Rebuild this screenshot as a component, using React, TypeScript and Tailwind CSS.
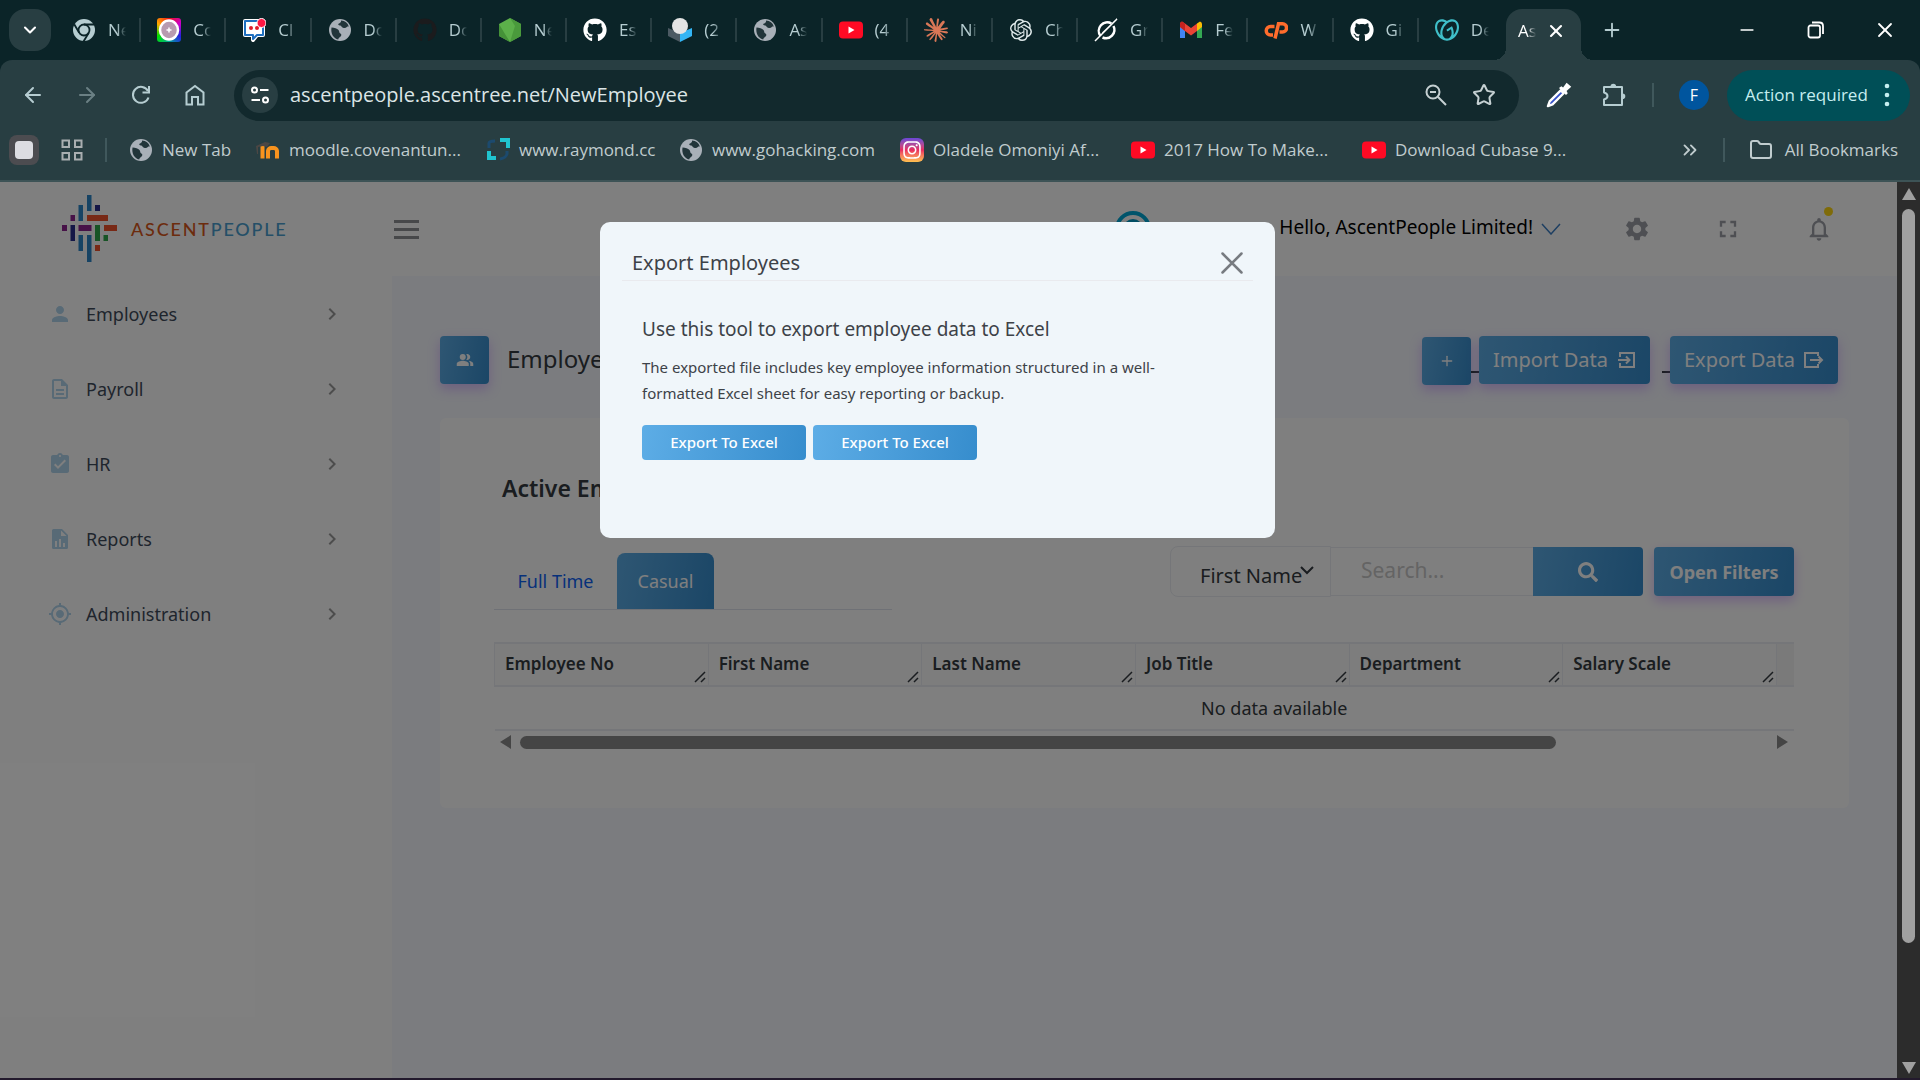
import type { ReactNode } from "react";
import { FaGithub, FaInstagram, FaSearch } from "react-icons/fa";
import {
  MdAssignmentTurnedIn,
  MdChevronRight,
  MdFullscreen,
  MdGpsFixed,
  MdNotificationsNone,
  MdOutlineDescription,
  MdPeopleAlt,
  MdPerson,
  MdSettings,
} from "react-icons/md";
import { SiClaude, SiGodaddy, SiOpenai } from "react-icons/si";
import { ArrowLeft, ArrowRight, ChevronDown, ChevronsRight, Folder, Minus, Plus, Star, X } from "lucide-react";

const BLUE = "bg-linear-100 from-[#5dade6] to-[#368dcd] text-white";
const GLOW = "shadow-[0_5px_12px_rgba(176,106,252,0.4)]";

/* ---------- favicons ---------- */

function Globe() {
  return (
    <svg viewBox="0 0 24 24" className="size-6">
      <circle cx="12" cy="12" r="11" fill="#a9b0b8" />
      <path
        d="M3.500 9.500c3 .2 5.500 1 7 2.500 1.200 1.200.2 2.500 1.500 3.300 1 .6 1.800 1.200 1 2.700-.8 1.400-2.500 1.600-2.800 3.500C5.500 20.500 2.500 15.500 3.500 9.500zM13 2.600c.5 1.900-1.200 2.600-2.500 3.200-.9.500.2 1.800 1.500 1.700 1.200-.1 1.600 1.700 3 2.200 1.700.6 3 .2 3.800-.8.500-.6 1.300-.6 2-.3C19.800 5 17 2.800 13 2.600z"
        fill="#22353a"
      />
    </svg>
  );
}

function ChromeMark() {
  return (
    <svg viewBox="0 0 24 24" className="size-6" fill="none">
      <circle cx="12" cy="12" r="11" fill="#b6cdd1" />
      <circle cx="12" cy="12" r="5.500" stroke="#0b2428" strokeWidth="1.800" fill="#b6cdd1" />
      <path d="M12 6.500h10M7.200 14.700 2.200 6.200M16.800 14.700 11.500 23.500" stroke="#0b2428" strokeWidth="1.800" />
    </svg>
  );
}

function ColorMark() {
  return (
    <span className="flex size-6 items-center justify-center rounded-[3px] bg-[conic-gradient(#e11,#c0c,#22d,#0a9,#0d0,#fa0,#e11)]">
      <svg viewBox="0 0 24 24" className="size-6" fill="none">
        <ellipse cx="12" cy="12" rx="9" ry="9.500" fill="#b89bb0" stroke="#fff" strokeWidth="2.500" />
        <path d="M12 9.500v5M9.500 12h5" stroke="#fff" strokeWidth="1.500" />
      </svg>
    </span>
  );
}

function ChatMark() {
  return (
    <svg viewBox="0 0 24 24" className="size-6">
      <path d="M3 3h18v14h-6l-4 5v-5H3z" fill="#fff" stroke="#fff" strokeWidth="4" strokeLinejoin="round" />
      <path d="M3 3h18v14h-6l-4 4v-4H3z" fill="#fff" stroke="#1f6fc0" strokeWidth="2" strokeLinejoin="round" />
      <circle cx="9" cy="10" r="2" fill="#e11d2a" />
      <circle cx="15" cy="10" r="2" fill="#e11d2a" />
      <circle cx="19.500" cy="5" r="4.500" fill="#ff1744" stroke="#fff" />
    </svg>
  );
}

function NodeMark() {
  return (
    <svg viewBox="0 0 24 24" className="size-6">
      <path d="M12 0l11 6v12l-11 6L1 18V6z" fill="#5cb04a" />
      <path d="M12 0l11 6v12l-11 6 5-16z" fill="#4a9a3c" />
      <path d="M1 6l6 10 5 8L1 18z" fill="#459238" />
    </svg>
  );
}

function HexMark() {
  return (
    <svg viewBox="0 0 24 24" className="size-6">
      <path d="M0 10l12 5v9L0 18z" fill="#4c5a63" />
      <path d="M24 10l-12 5v9l12-6z" fill="#33b5f5" />
      <ellipse cx="12" cy="8" rx="8" ry="8" fill="#e4e4e4" />
    </svg>
  );
}

function YoutubeMark() {
  return (
    <svg viewBox="0 0 24 24" className="size-6">
      <rect y="3.500" width="24" height="17" rx="4" fill="#ff0a24" />
      <path d="M9.500 8.500v7l6-3.500z" fill="#fff" />
    </svg>
  );
}

function GrokMark() {
  return (
    <svg viewBox="0 0 24 24" className="size-6" fill="none" stroke="#fff" strokeWidth="2.500">
      <path d="M17.500 5.500a8.500 8.500 0 0 0-11 12.500M19.500 8a8.500 8.500 0 0 1-11 11.500" />
      <path d="M1 23 23 1 8.500 15" strokeWidth="1.500" />
    </svg>
  );
}

function GmailMark() {
  return (
    <svg viewBox="0 0 24 24" className="size-6">
      <path d="M1 6v14h5V10z" fill="#4285f4" />
      <path d="M23 6v14h-5V10z" fill="#34a853" />
      <path d="M18 5.500 21 3.500q2 .5 2 2.500v3l-5 4z" fill="#fbbc04" />
      <path d="M1 9V6q0-2 2-2.500L6 5.500l6 4.500 6-4.500V13l-6 4.500L6 13z" fill="#ea4335" />
      <path d="M1 9V6q0-2 2-2.500L6 5.500V13z" fill="#c5221f" />
    </svg>
  );
}

function CpanelMark() {
  return (
    <svg viewBox="0 0 24 24" className="size-6" fill="none" stroke="#ff6c2c" strokeWidth="3.500">
      <path d="M10.500 8.500H6.500a4.200 4.200 0 0 0 0 8.500H9" />
      <path d="M11 20.500 14.500 5.800H18.500a3.800 3.800 0 0 1 0 8.200H15.500" />
    </svg>
  );
}

function MoodleMark() {
  return (
    <svg viewBox="0 0 24 24" className="size-6" fill="none">
      <path d="M6.500 8v12.500M12 20.500V13a3.300 3.300 0 0 1 3.500-3h2a3.300 3.300 0 0 1 3.500 3v7.500" stroke="#f7931e" strokeWidth="4" />
      <path d="M0 8l9-4 5 1-3 4-4-1-5 1v7H1z" fill="#4c4744" />
    </svg>
  );
}

function RaymondMark() {
  return (
    <svg viewBox="0 0 24 24" className="size-6" fill="none">
      <path d="M14 2h8v8" stroke="#20c4cf" strokeWidth="4" />
      <path d="M3 13v7h7" stroke="#20c4cf" strokeWidth="4" />
      <path d="M3 10V5q0-2 6-2M21 13v3q-1 4-7 5" stroke="#1c4a6e" strokeWidth="3" />
    </svg>
  );
}

/* ---------- browser window ---------- */

const TABS: { label: string; icon: ReactNode }[] = [
  { label: "Ne", icon: <ChromeMark /> },
  { label: "Co", icon: <ColorMark /> },
  { label: "Cl", icon: <ChatMark /> },
  { label: "Do", icon: <Globe /> },
  { label: "Do", icon: <FaGithub className="size-6 text-[#1b1b1d]" /> },
  { label: "Ne", icon: <NodeMark /> },
  { label: "Es", icon: <FaGithub className="size-6 text-white" /> },
  { label: "(2", icon: <HexMark /> },
  { label: "As", icon: <Globe /> },
  { label: "(4", icon: <YoutubeMark /> },
  { label: "Ni", icon: <SiClaude className="size-6 text-[#d97757]" /> },
  { label: "Ch", icon: <SiOpenai className="size-6 p-px text-[#dfe9ea]" /> },
  { label: "Gr", icon: <GrokMark /> },
  { label: "Fe", icon: <GmailMark /> },
  { label: "W", icon: <CpanelMark /> },
  { label: "Gi", icon: <FaGithub className="size-6 text-white" /> },
  { label: "De", icon: <SiGodaddy className="size-6 text-[#3fbfc9]" /> },
];

const BOOKMARKS: { label: string; icon: ReactNode; width: string }[] = [
  { label: "New Tab", icon: <Globe />, width: "w-[127px]" },
  { label: "moodle.covenantun...", icon: <MoodleMark />, width: "w-[230px]" },
  { label: "www.raymond.cc", icon: <RaymondMark />, width: "w-[193px]" },
  { label: "www.gohacking.com", icon: <Globe />, width: "w-[221px]" },
  {
    label: "Oladele Omoniyi Af...",
    icon: (
      <span className="flex size-6 items-center justify-center rounded-md bg-linear-to-t from-[#fdc04e] via-[#e8265e] to-[#6a45d8]">
        <FaInstagram className="size-5 text-white" />
      </span>
    ),
    width: "w-[231px]",
  },
  { label: "2017 How To Make...", icon: <YoutubeMark />, width: "w-[231px]" },
  { label: "Download Cubase 9...", icon: <YoutubeMark />, width: "w-[231px]" },
];

function TabStrip() {
  return (
    <div className="flex h-[60px] items-end pl-[9px] text-[17px] text-[#b6cdd1]">
      <button aria-label="Search tabs" className="mb-[9px] flex size-[42px] items-center justify-center rounded-2xl bg-[#283e42] text-white">
        <ChevronDown className="size-5" strokeWidth={2.5} />
      </button>
      <div className="flex h-[60px] min-w-0 flex-1 items-center pl-[5px]">
        {TABS.map((tab, i) => (
          <div key={i} className="flex h-6 min-w-0 flex-1 items-center border-r-2 border-[#283e42] pl-4 last:border-transparent">
            <span className="shrink-0">{tab.icon}</span>
            <span className="ml-3 w-[18px] overflow-hidden mask-r-from-50% whitespace-nowrap">{tab.label}</span>
          </div>
        ))}
      </div>
      <div className="relative ml-0.5 flex h-[51px] w-[75px] shrink-0 items-center rounded-t-2xl bg-[#283e42] pb-2 pl-3 text-white before:absolute before:bottom-0 before:-left-3 before:size-3 before:bg-[radial-gradient(circle_at_0_0,transparent_12px,#283e42_12px)] after:absolute after:-right-3 after:bottom-0 after:size-3 after:bg-[radial-gradient(circle_at_100%_0,transparent_12px,#283e42_12px)]">
        <span className="w-[18px] overflow-hidden mask-r-from-50% whitespace-nowrap">As</span>
        <button aria-label="Close tab" className="ml-2.5">
          <X className="size-5" strokeWidth={2.5} />
        </button>
      </div>
      <div className="flex h-[60px] items-center">
        <button aria-label="New tab" className="flex w-[62px] justify-center">
          <Plus className="size-[22px]" />
        </button>
        <div className="ml-[69px] flex items-center text-white">
          <button aria-label="Minimize" className="flex w-[70px] justify-center">
            <Minus className="size-5" />
          </button>
          <button aria-label="Restore" className="flex w-[68px] justify-center">
            <svg viewBox="0 0 18 18" className="size-[18px]" fill="none" stroke="currentColor" strokeWidth="1.800">
              <rect x="1.500" y="4.500" width="11.500" height="12" rx="2" />
              <path d="M5 1.500h7.500q3.500 0 3.500 3.500v8" />
            </svg>
          </button>
          <button aria-label="Close window" className="flex w-[70px] justify-center">
            <X className="size-6" strokeWidth={1.8} />
          </button>
        </div>
      </div>
    </div>
  );
}

function Toolbar() {
  return (
    <div className="flex h-[69px] items-center rounded-t-xl bg-[#283e42] pt-px pr-[10px] pl-[6px] text-[#b6cdd1]">
      <button aria-label="Back" className="flex w-[54px] justify-center">
        <ArrowLeft className="size-6" />
      </button>
      <button aria-label="Forward" className="flex w-[54px] justify-center text-[#6b8084]">
        <ArrowRight className="size-6" />
      </button>
      <button aria-label="Reload" className="flex w-[54px] justify-center">
        <svg viewBox="0 0 24 24" className="size-6" fill="none" stroke="currentColor" strokeWidth="2">
          <path d="M19.500 14.500A8 8 0 1 1 19 8" />
          <path d="M20 3v6.500h-6.500" />
        </svg>
      </button>
      <button aria-label="Home" className="flex w-[54px] justify-center">
        <svg viewBox="0 0 24 24" className="size-6" fill="none" stroke="currentColor" strokeWidth="2">
          <path d="M3.500 9.500 12 3l8.500 6.500V21.500H15V14H9v7.500H3.500z" />
        </svg>
      </button>
      <div className="ml-3 flex h-[51px] min-w-0 flex-1 items-center rounded-full bg-[#12292d] pr-[23px] pl-2">
        <button aria-label="Site information" className="flex size-9 items-center justify-center rounded-full bg-[#283e42] text-white">
          <svg viewBox="0 0 20 20" className="size-5" fill="none" stroke="currentColor" strokeWidth="2">
            <circle cx="4.500" cy="5" r="2.500" />
            <path d="M10 5h8.500M1.500 15H10" />
            <circle cx="15.500" cy="15" r="2.500" />
          </svg>
        </button>
        <input
          aria-label="Address"
          readOnly
          value="ascentpeople.ascentree.net/NewEmployee"
          className="ml-3 min-w-0 flex-1 bg-transparent text-xl text-[#dce5e6] outline-none"
        />
        <button aria-label="Zoom" className="flex w-12 justify-center text-[#c5d0d2]">
          <svg viewBox="0 0 24 24" className="size-6" fill="none" stroke="currentColor" strokeWidth="2">
            <circle cx="9" cy="9" r="6.500" />
            <path d="M13.800 13.800 22 22M6 9h6" />
          </svg>
        </button>
        <button aria-label="Bookmark this page" className="flex w-9 justify-end text-[#c5d0d2]">
          <Star className="size-6" strokeLinejoin="miter" />
        </button>
      </div>
      <div className="flex items-center">
        <button aria-label="Color picker" className="ml-[26px]">
          <svg viewBox="0 0 24 24" className="size-7">
            <path d="M13.500 8 4 17.500 2.500 21.500l4-1.500L16 10.500z" fill="#3550c8" stroke="#fff" strokeWidth="2" strokeLinejoin="round" />
            <path d="M12 6l2-1.500 1.500 1 3-4 4 3.500-4 3.500 1 2L18 12z" fill="#fff" />
          </svg>
        </button>
        <button aria-label="Extensions" className="ml-7">
          <svg viewBox="0 0 26 26" className="size-[26px]" fill="none" stroke="currentColor" strokeWidth="2">
            <path d="M3 5h18v18H3v-5.500q3.500-1 3.500-3.500T3 10.500z" strokeLinejoin="round" />
            <path d="M9.500 4.500a2.800 2.800 0 0 1 5.600 0zM21.500 11.500a2.800 2.800 0 0 1 0 5.600z" fill="currentColor" stroke="none" />
          </svg>
        </button>
        <span className="ml-[25px] h-6 w-0.5 bg-[#40585c]" />
        <span className="ml-[25px] flex size-[30px] items-center justify-center rounded-full bg-[#00559e] text-base text-white">F</span>
        <button className="ml-[18px] flex h-[51px] w-[183px] items-center rounded-full bg-[#004f57] pl-[18px] text-[17px] whitespace-nowrap text-[#c6eef0]">
          Action required
          <svg viewBox="0 0 6 26" className="mr-5 ml-auto h-[26px] w-1.5" fill="currentColor">
            <circle cx="3" cy="4" r="2.300" />
            <circle cx="3" cy="13" r="2.300" />
            <circle cx="3" cy="22" r="2.300" />
          </svg>
        </button>
      </div>
    </div>
  );
}

function BookmarksBar() {
  return (
    <div className="flex h-[53px] items-start border-b-2 border-[#3d5356] bg-[#283e42] pt-[6px] pl-[9px] text-[17px] text-[#c0ccce]">
      <div className="flex h-[30px] w-full items-center">
        <button aria-label="Stop" className="flex size-[30px] items-center justify-center rounded-lg bg-[#4c4c50]">
          <span className="size-[18px] rounded bg-[#dddde2]" />
        </button>
        <button aria-label="Tab groups" className="ml-[21px]">
          <svg viewBox="0 0 24 24" className="size-6" fill="none" stroke="#a9aeb0" strokeWidth="2">
            <path d="M2.500 2.500h6.500v6.500H2.500zM15 2.500h6.500v6.500H15zM2.500 15h6.500v6.500H2.500zM15 15h6.500v6.500H15z" />
          </svg>
        </button>
        <span className="mr-[22px] ml-[21px] h-6 w-0.5 bg-[#40585c]" />
        {BOOKMARKS.map((bookmark) => (
          <a key={bookmark.label} href="#" className={`flex shrink-0 items-center gap-[9px] whitespace-nowrap ${bookmark.width}`}>
            {bookmark.icon}
            {bookmark.label}
          </a>
        ))}
        <button aria-label="More bookmarks" className="ml-auto">
          <ChevronsRight className="size-[22px]" />
        </button>
        <span className="ml-[22px] h-6 w-0.5 bg-[#40585c]" />
        <a href="#" className="ml-6 flex items-center gap-3 pr-[22px] whitespace-nowrap">
          <Folder className="size-6" />
          All Bookmarks
        </a>
      </div>
    </div>
  );
}

/* ---------- application ---------- */

function Brand() {
  return (
    <a href="#" className="flex w-[392px] shrink-0 items-center gap-[14px] pl-[62px] font-[Lato] text-lg font-medium tracking-widest">
      <svg viewBox="0 0 55 68" className="h-[68px] w-[55px]">
        <g fill="#2d86c9">
          <rect x="25" y="0" width="4.500" height="16" />
          <rect x="16.500" y="10" width="4.500" height="16" />
          <rect x="16.500" y="40" width="4.500" height="16" />
          <rect x="25" y="40" width="4.500" height="27" />
        </g>
        <g fill="#2a2f8f">
          <rect x="33" y="10" width="5" height="6" />
          <rect x="8.500" y="30" width="4.500" height="16" />
        </g>
        <g fill="#8f2590">
          <rect x="8.500" y="20" width="4.500" height="6" />
          <rect x="0" y="30" width="5" height="6" />
          <rect x="16.500" y="30" width="13" height="6" />
        </g>
        <g fill="#f0532d">
          <rect x="25" y="20" width="21" height="6" />
          <rect x="42" y="30" width="13" height="6" />
          <rect x="33" y="50" width="5" height="6" />
        </g>
        <g fill="#2fa84a">
          <rect x="33" y="30" width="5" height="16" />
          <rect x="41.500" y="40" width="4.500" height="6" />
        </g>
      </svg>
      <span className="text-[#d9581b]">
        ASCENT<span className="text-[#4a9fd0]">PEOPLE</span>
      </span>
    </a>
  );
}

function AppHeader() {
  return (
    <header className="flex h-[94px] shrink-0 items-center bg-white pr-[33px]">
      <Brand />
      <button aria-label="Toggle menu" className="ml-0.5 flex w-[25px] flex-col gap-[5px]">
        <span className="h-[3px] bg-[#8f9094]" />
        <span className="h-[3px] bg-[#8f9094]" />
        <span className="h-[3px] bg-[#8f9094]" />
      </button>
      <div className="ml-auto flex items-center">
        <svg viewBox="0 0 36 36" className="size-9" fill="none">
          <circle cx="18" cy="18" r="16" stroke="#00a9d6" strokeWidth="4" />
          <circle cx="18" cy="18" r="10" fill="#009ac6" />
          <circle cx="18" cy="18" r="4" fill="#fff" />
        </svg>
        <button className="ml-32 flex items-center gap-2 pb-1 text-[19px] whitespace-nowrap text-black">
          Hello, AscentPeople Limited!
          <svg viewBox="0 0 20 12" className="mt-1 h-3 w-5" fill="none" stroke="#3d7fc4" strokeWidth="1.500">
            <path d="M1 1l9 10 9-10" />
          </svg>
        </button>
        <div className="ml-[30px] flex text-[#9c9fa6]">
          <button aria-label="Settings" className="flex w-[91px] justify-center">
            <MdSettings className="size-7" />
          </button>
          <button aria-label="Full screen" className="flex w-[91px] justify-center">
            <MdFullscreen className="size-7" />
          </button>
          <button aria-label="Notifications" className="relative flex w-[91px] justify-center">
            <MdNotificationsNone className="size-7" />
            <span className="absolute -top-2 left-[51px] size-[9px] rounded-full bg-[#fed713]" />
          </button>
        </div>
      </div>
    </header>
  );
}

function ReportIcon() {
  return (
    <svg viewBox="0 0 24 24" className="size-6" fill="currentColor">
      <path
        fillRule="evenodd"
        d="M5.500 2H14l6 6v12.500q0 1.500-1.500 1.500h-13Q4 22 4 20.500v-17Q4 2 5.500 2zM13 3.500V9h5.500zM7 14v6h2v-6zm4-2v8h2v-8zm4 4v4h2v-4z"
      />
    </svg>
  );
}

const MENU: { label: string; icon: ReactNode }[] = [
  { label: "Employees", icon: <MdPerson className="size-6" /> },
  { label: "Payroll", icon: <MdOutlineDescription className="size-6" /> },
  { label: "HR", icon: <MdAssignmentTurnedIn className="size-6" /> },
  { label: "Reports", icon: <ReportIcon /> },
  { label: "Administration", icon: <MdGpsFixed className="size-6" /> },
];

function Sidebar() {
  return (
    <nav className="w-[392px] shrink-0 bg-white">
      {MENU.map((item) => (
        <a key={item.label} href="#" className="flex h-[75px] items-center px-12 text-lg text-[#3e4b5b]">
          <span className="text-[#b0d4ec]">{item.icon}</span>
          <span className="ml-[14px]">{item.label}</span>
          <MdChevronRight className="ml-auto size-6 text-[#9a9a9a]" />
        </a>
      ))}
    </nav>
  );
}

function ImportIcon() {
  return (
    <svg viewBox="0 0 18 18" className="size-[18px]" fill="none" stroke="currentColor" strokeWidth="2">
      <path d="M2 6V2h14v14H2v-4M0 9h11M8 5.500 11.500 9 8 12.500" />
    </svg>
  );
}

function ExportIcon() {
  return (
    <svg viewBox="0 0 21 18" className="h-[18px] w-[21px]" fill="none" stroke="currentColor" strokeWidth="2">
      <path d="M15 5V2H2v14h13v-3M7 9h12M15.500 5.500 19 9l-3.500 3.500" />
    </svg>
  );
}

function PageHeading() {
  return (
    <div className="flex items-start">
      <span className={`flex h-12 w-[49px] items-center justify-center rounded ${BLUE} ${GLOW}`}>
        <MdPeopleAlt className="size-[18px]" />
      </span>
      <h1 className="ml-[18px] text-2xl leading-[46px] text-[#343a40]">Employees</h1>
      <div className="ml-auto flex items-start pr-[11px] text-xl whitespace-nowrap">
        <button aria-label="Add employee" className={`mt-px flex h-12 w-[49px] items-center justify-center rounded ${BLUE} ${GLOW}`}>
          <Plus className="size-4" />
        </button>
        <span className="h-[37px] w-2 border-b-2 border-[#343a40]" />
        <button className={`flex h-12 w-[171px] items-center justify-center gap-2.5 rounded ${BLUE} ${GLOW}`}>
          Import Data
          <ImportIcon />
        </button>
        <span className="ml-3 h-[37px] w-2 border-b-2 border-[#343a40]" />
        <button className={`flex h-12 w-[168px] items-center justify-center gap-2 rounded ${BLUE} ${GLOW}`}>
          Export Data
          <ExportIcon />
        </button>
      </div>
    </div>
  );
}

function FilterBar() {
  return (
    <form className="flex items-start">
      <label className="relative">
        <select aria-label="Search field" className="block h-[51px] w-[161px] appearance-none rounded-l-lg border border-[#ebedf2] bg-transparent pt-2 pl-[29px] text-xl text-[#343a40]">
          <option>First Name</option>
          <option>Last Name</option>
        </select>
        <svg viewBox="0 0 14 9" className="absolute top-5 right-[17px] h-[9px] w-3.5" fill="none" stroke="#343a40" strokeWidth="2">
          <path d="M1 1l6 6 6-6" />
        </svg>
      </label>
      <input
        aria-label="Search"
        placeholder="Search..."
        className="mt-px h-[49px] w-[202px] border-y border-[#ebedf2] bg-transparent pb-1 pl-[30px] text-[21px] placeholder:text-[#c9c8c8]"
      />
      <button type="button" aria-label="Search" className={`mt-px flex h-[49px] w-[110px] items-center justify-center rounded-r ${BLUE}`}>
        <FaSearch className="size-5" />
      </button>
      <button type="button" className={`mt-px ml-[11px] h-[49px] w-[140px] rounded text-lg font-bold whitespace-nowrap ${BLUE} ${GLOW}`}>
        Open Filters
      </button>
    </form>
  );
}

const COLUMNS = ["Employee No", "First Name", "Last Name", "Job Title", "Department", "Salary Scale"];

function EmployeeTable() {
  return (
    <div className="mt-8 overflow-hidden">
      <table className="w-[120%] table-fixed border-collapse text-[#343a40]">
        <thead>
          <tr className="h-[43px] border-y-2 border-[#ebedf2] bg-[#fafafa]">
            {COLUMNS.map((column) => (
              <th key={column} className="relative w-[13.7%] border-l border-[#ebedf2] pb-0.5 pl-[10px] text-left text-[17px] font-semibold">
                {column}
                <svg viewBox="0 0 12 12" className="absolute right-[2px] bottom-0.5 size-3" stroke="#343a40" strokeWidth="1.500">
                  <path d="M1 11 11 1M7 11l4-4" />
                </svg>
              </th>
            ))}
            <th className="border-l border-[#ebedf2] bg-[#f5f5f5]" />
          </tr>
        </thead>
        <tbody>
          <tr className="h-11 border-b-2 border-[#ebedf2]">
            <td colSpan={7} className="text-center text-lg">
              No data available
            </td>
          </tr>
        </tbody>
      </table>
      <div className="flex h-[22px] items-center justify-between px-1.5 text-[#8b8b8b]">
        <svg viewBox="0 0 12 14" className="h-3.5 w-3" fill="currentColor">
          <path d="M11 0v14L0 7z" />
        </svg>
        <div className="mx-2 flex-1">
          <div className="h-[13px] w-[83%] rounded-full bg-[#8b8b8b]" />
        </div>
        <svg viewBox="0 0 12 14" className="h-3.5 w-3" fill="currentColor">
          <path d="M1 0v14l11-7z" />
        </svg>
      </div>
    </div>
  );
}

function EmployeeCard() {
  return (
    <section className="mt-[33px] rounded-md bg-white pt-[54px] pr-[55px] pb-[55px] pl-[54px]">
      <h2 className="pl-2 text-[23px] leading-8 font-semibold text-[#343a40]">Active Employees</h2>
      <div className="mt-[42px] flex items-start justify-between">
        <div className="mt-[7px] flex w-[398px] border-b border-[#dfe2ec] text-lg">
          <button className="h-14 w-[123px] text-[#0d62f5]">Full Time</button>
          <button className={`h-14 w-[97px] rounded-t-lg ${BLUE}`}>Casual</button>
        </div>
        <FilterBar />
      </div>
      <EmployeeTable />
    </section>
  );
}

function ExportDialog() {
  return (
    <div className="absolute inset-0 bg-black/50 pr-[22px]">
      <div role="dialog" aria-labelledby="export-title" className="mx-auto mt-10 h-[316px] w-[675px] rounded-[10px] bg-[#f0f6fa] px-[22px] text-[#3d4248]">
        <div className="flex h-[59px] items-end justify-between border-b border-[#e9eaee] px-[10px] pb-[3px]">
          <h2 id="export-title" className="text-xl leading-7">
            Export Employees
          </h2>
          <button aria-label="Close" className="mb-[3px] text-[#777b80]">
            <svg viewBox="0 0 22 22" className="size-[22px]" fill="none" stroke="currentColor" strokeWidth="2.500" strokeLinecap="round">
              <path d="M1.500 1.500l19 19M20.500 1.500l-19 19" />
            </svg>
          </button>
        </div>
        <div className="px-5 pt-[35px]">
          <h3 className="text-[19px] leading-[27px]">Use this tool to export employee data to Excel</h3>
          <p className="mt-[11px] w-[540px] text-[15px] leading-[26px]">
            The exported file includes key employee information structured in a well-formatted Excel sheet for easy reporting or backup.
          </p>
          <div className="mt-[19px] flex gap-[7px] text-[15px] font-medium">
            <button className={`h-[35px] w-[164px] rounded ${BLUE}`}>Export To Excel</button>
            <button className={`h-[35px] w-[164px] rounded ${BLUE}`}>Export To Excel</button>
          </div>
        </div>
      </div>
    </div>
  );
}

function PageScrollbar() {
  return (
    <div className="flex w-[23px] shrink-0 flex-col items-center bg-[#2c2c2c] pt-[6px] pb-1 text-[#a0a0a0]">
      <svg viewBox="0 0 14 12" className="h-3 w-3.5" fill="currentColor">
        <path d="M7 0l7 12H0z" />
      </svg>
      <div className="mt-[9px] mb-[9px] w-[13px] flex-1">
        <div className="h-[87%] rounded-full bg-[#a0a0a0]" />
      </div>
      <svg viewBox="0 0 14 12" className="h-3 w-3.5" fill="currentColor">
        <path d="M7 12l7-12H0z" />
      </svg>
    </div>
  );
}

export default function App() {
  return (
    <div className="flex min-h-screen flex-col bg-[#0b2428] font-['Open_Sans',sans-serif]">
      <TabStrip />
      <Toolbar />
      <BookmarksBar />
      <div className="flex flex-1 border-b-2 border-[#231a2d] font-['Noto_Sans',sans-serif]">
        <div className="relative flex min-w-0 flex-1 flex-col bg-white">
          <AppHeader />
          <div className="flex flex-1">
            <Sidebar />
            <main className="min-w-0 flex-1 bg-[#f6f8ff] px-12 pt-[60px]">
              <PageHeading />
              <EmployeeCard />
            </main>
          </div>
          <ExportDialog />
        </div>
        <PageScrollbar />
      </div>
    </div>
  );
}
